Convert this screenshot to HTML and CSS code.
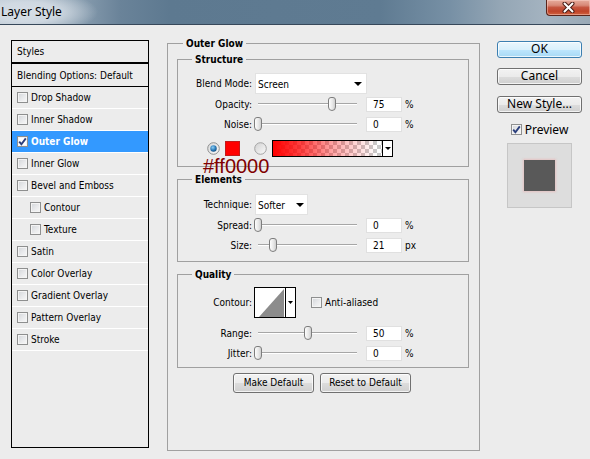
FILE: index.html
```html
<!DOCTYPE html>
<html lang="en">
<head>
<meta charset="utf-8">
<title>Layer Style</title>
<link rel="stylesheet" href="styles.css">
</head>
<body>
<div class="titlebar">
  <span class="title">Layer Style</span>
  <div class="close">
    <svg width="13" height="11" viewBox="0 0 13 11"><path d="M2.5 1.5 L10.5 9.5 M10.5 1.5 L2.5 9.5" stroke="#4a1d16" stroke-width="4" stroke-linecap="round"/><path d="M2.5 1.5 L10.5 9.5 M10.5 1.5 L2.5 9.5" stroke="#fff" stroke-width="2" stroke-linecap="round"/></svg>
  </div>
</div>
<div class="content">
  <div class="styles">
    <div class="item head">Styles</div>
    <div class="item blendopt">Blending Options: Default</div>
    <div class="item"><span class="cb"></span>Drop Shadow</div>
    <div class="item"><span class="cb"></span>Inner Shadow</div>
    <div class="item active"><span class="cb"><svg width="9" height="9" viewBox="0 0 9 9"><path d="M1.2 4.6 L3.4 7.2 L7.8 1.4" fill="none" stroke="#2b3f7c" stroke-width="1.9"/></svg></span>Outer Glow</div>
    <div class="item"><span class="cb"></span>Inner Glow</div>
    <div class="item"><span class="cb"></span>Bevel and Emboss</div>
    <div class="item sub-item"><span class="cb"></span>Contour</div>
    <div class="item sub-item"><span class="cb"></span>Texture</div>
    <div class="item"><span class="cb"></span>Satin</div>
    <div class="item"><span class="cb"></span>Color Overlay</div>
    <div class="item"><span class="cb"></span>Gradient Overlay</div>
    <div class="item"><span class="cb"></span>Pattern Overlay</div>
    <div class="item"><span class="cb"></span>Stroke</div>
  </div>

  <fieldset class="og">
    <legend>Outer Glow</legend>

    <fieldset class="grp structure">
      <legend>Structure</legend>
      <div class="row row-sel">
        <span class="lbl">Blend Mode:</span>
        <div class="select sel-blend"><span>Screen</span><span class="arrow"></span></div>
      </div>
      <div class="row">
        <span class="lbl">Opacity:</span>
        <div class="slider"><span class="thumb" style="--v:.75"></span></div>
        <div class="num">75</div><span class="unit">%</span>
      </div>
      <div class="row">
        <span class="lbl">Noise:</span>
        <div class="slider"><span class="thumb" style="--v:0"></span></div>
        <div class="num">0</div><span class="unit">%</span>
      </div>
      <div class="row color-row">
        <svg class="radio" width="13" height="13" viewBox="0 0 13 13">
          <defs><linearGradient id="rg1" x1="0" y1="0" x2="1" y2="1"><stop offset="0" stop-color="#d8d8d8"/><stop offset="1" stop-color="#fafafa"/></linearGradient>
          <radialGradient id="dot1" cx=".4" cy=".35" r=".7"><stop offset="0" stop-color="#8fd0f5"/><stop offset=".6" stop-color="#2a7ab8"/><stop offset="1" stop-color="#124a7a"/></radialGradient></defs>
          <circle cx="6.5" cy="6.5" r="5.8" fill="url(#rg1)" stroke="#8e8f8f"/>
          <circle cx="6.5" cy="6.5" r="3.2" fill="url(#dot1)"/>
        </svg>
        <span class="swatch"></span>
        <svg class="radio radio2" width="13" height="13" viewBox="0 0 13 13">
          <defs><linearGradient id="rg2" x1="0" y1="0" x2="1" y2="1"><stop offset="0" stop-color="#d0d0d0"/><stop offset="1" stop-color="#fbfbfb"/></linearGradient></defs>
          <circle cx="6.5" cy="6.5" r="5.8" fill="url(#rg2)" stroke="#a3a3a3"/>
        </svg>
        <div class="grad"><span class="grad-fill"></span><span class="grad-drop"><span class="arrow small"></span></span></div>
        <span class="hex">#ff0000</span>
      </div>
    </fieldset>

    <fieldset class="grp elements">
      <legend>Elements</legend>
      <div class="row row-sel">
        <span class="lbl">Technique:</span>
        <div class="select sel-tech"><span>Softer</span><span class="arrow"></span></div>
      </div>
      <div class="row">
        <span class="lbl">Spread:</span>
        <div class="slider"><span class="thumb" style="--v:0"></span></div>
        <div class="num">0</div><span class="unit">%</span>
      </div>
      <div class="row">
        <span class="lbl">Size:</span>
        <div class="slider"><span class="thumb" style="--v:.148"></span></div>
        <div class="num">21</div><span class="unit">px</span>
      </div>
    </fieldset>

    <fieldset class="grp quality">
      <legend>Quality</legend>
      <div class="row row-contour">
        <span class="lbl">Contour:</span>
        <svg class="contour" width="42" height="31" viewBox="0 0 42 31">
          <rect x="0.5" y="0.5" width="41" height="30" fill="#fff" stroke="#000"/>
          <polygon points="5,30 30,2 30,30" fill="#8c8c8c"/>
          <line x1="31.5" y1="1" x2="31.5" y2="30" stroke="#000"/>
          <polygon points="34,14 39,14 36.5,17" fill="#000"/>
        </svg>
        <span class="cb aa"></span><span class="aa-text">Anti-aliased</span>
      </div>
      <div class="row row-range">
        <span class="lbl">Range:</span>
        <div class="slider"><span class="thumb" style="--v:.5"></span></div>
        <div class="num">50</div><span class="unit">%</span>
      </div>
      <div class="row">
        <span class="lbl">Jitter:</span>
        <div class="slider"><span class="thumb" style="--v:0"></span></div>
        <div class="num">0</div><span class="unit">%</span>
      </div>
    </fieldset>

    <div class="defaults">
      <div class="btn small w-make">Make Default</div>
      <div class="btn small w-reset">Reset to Default</div>
    </div>
  </fieldset>

  <div class="side">
    <div class="btn big default">OK</div>
    <div class="btn big cancel">Cancel</div>
    <div class="btn big newstyle">New Style...</div>
    <div class="preview-row"><span class="cb"><svg width="9" height="9" viewBox="0 0 9 9"><path d="M1.2 4.6 L3.4 7.2 L7.8 1.4" fill="none" stroke="#2b3f7c" stroke-width="1.9"/></svg></span><span>Preview</span></div>
    <div class="preview"><span class="preview-sq"></span></div>
  </div>
</div>
</body>
</html>
```
FILE: styles.css
```css
* { box-sizing: border-box; }
html, body { margin: 0; padding: 0; }
body {
  width: 590px;
  height: 459px;
  overflow: hidden;
  background: #ececec;
  font-family: "DejaVu Sans Condensed", "Liberation Sans", sans-serif;
  font-size: 10px;
  color: #000;
}

/* title bar */
.titlebar {
  height: 25px;
  border-bottom: 1px solid #37485a;
  display: flex;
  justify-content: space-between;
  align-items: flex-start;
  background:
    radial-gradient(ellipse 70px 22px at 28px 12px, rgba(214,222,230,1) 0, rgba(214,222,230,.85) 45%, rgba(214,222,230,0) 100%),
    linear-gradient(90deg, #b9c5d0 0, #8fa3b4 70px, #6a8399 120px, #5d7990 170px, #5f7b92 380px, #7790a5 450px, #94a6b5 500px, #a4b3c0 545px, #9aa9b6 590px);
}
.title {
  font-family: "Noto Sans", "Open Sans", sans-serif;
  font-size: 12px;
  line-height: 23px;
  padding-left: 1px;
  color: #000;
}
.close {
  width: 44px;
  height: 16px;
  border: 1px solid #5a241a;
  border-top: 0;
  border-right: 0;
  border-radius: 0 0 0 4px;
  background: linear-gradient(#e6ab9c 0, #d88a78 35%, #c5553f 50%, #c0442a 75%, #d0623f 100%);
  box-shadow: inset 0 0 0 1px rgba(255,220,210,.45);
  display: flex;
  align-items: center;
  justify-content: center;
}

.content { display: flex; align-items: flex-start; }

/* styles list */
.styles {
  margin: 15px 0 0 11px;
  width: 138px;
  height: 408px;
  border: 1px solid #000;
  flex: none;
}
.item {
  height: 22px;
  border-bottom: 1px solid #fff;
  display: flex;
  align-items: center;
  gap: 3px;
  padding-left: 5px;
  white-space: nowrap;
}
.item.head { height: 23px; border-bottom: 2px solid #000; }
.item.blendopt { height: 23px; border-bottom: 1px solid #000; }
.item.sub-item { padding-left: 18px; }
.item.active { background: #3399ff; color: #fff; font-weight: bold; }

.cb {
  width: 11px;
  height: 11px;
  flex: none;
  border: 1px solid #8e8f8f;
  background: linear-gradient(135deg, #d2d5d9 0, #e9eaec 55%, #f8f8f8 100%);
  box-shadow: inset 0 0 0 1px #f4f4f4;
  display: flex;
  align-items: center;
  justify-content: center;
}
.item.active .cb { background: #fff; }

/* fieldsets */
fieldset {
  margin: 0;
  padding: 0;
  border: 1px solid #a0a0a0;
  min-width: 0;
}
legend {
  padding: 0 3px;
  font-weight: bold;
  line-height: 13px;
  height: 13px;
}
.og {
  margin: 12px 0 0 18px;
  width: 313px;
  height: 414px;
  flex: none;
}
.og > legend { margin-left: 15px; }
.grp { margin-left: 9px; width: 292px; }
.grp > legend { margin-left: 14px; }
.structure { margin-top: 3px; padding-bottom: 9px; }
.elements { margin-top: 6px; padding-bottom: 6px; }
.quality { margin-top: 6px; padding-bottom: 4px; }

.row {
  display: flex;
  align-items: center;
  height: 20px;
}
.lbl {
  width: 74px;
  text-align: right;
  flex: none;
  white-space: nowrap;
}
.row-sel { height: 21px; }
.structure .row-sel { margin-top: 7px; }
.elements .row-sel { margin-top: 8px; }

.select {
  margin-left: 3px;
  height: 21px;
  background: #fff;
  border: 1px solid #e2e2e2;
  display: flex;
  align-items: center;
  justify-content: space-between;
  padding: 1px 3px 0 2px;
}
.sel-blend { width: 112px; padding-right: 4px; }
.sel-tech { width: 53px; padding-right: 3px; }
.arrow {
  width: 0;
  height: 0;
  border-left: 4px solid transparent;
  border-right: 4px solid transparent;
  border-top: 4px solid #000;
}
.arrow.small {
  border-left-width: 3px;
  border-right-width: 3px;
  border-top-width: 3px;
}

.slider {
  position: relative;
  margin-left: 2px;
  width: 108px;
  height: 14px;
  flex: none;
}
.slider::before {
  content: "";
  position: absolute;
  left: 4px;
  width: 99px;
  top: 6px;
  height: 1px;
  background: #a6a6a6;
  box-shadow: 0 1px 0 #fff;
}
.thumb {
  position: absolute;
  top: 0;
  left: calc(4px + 99px * var(--v));
  margin-left: -4px;
  width: 8px;
  height: 14px;
  border: 1px solid #7d7d7d;
  border-radius: 3px 3px 4px 4px;
  background: linear-gradient(90deg, #fdfdfd 0, #e6e6e6 60%, #cfcfcf 100%);
}
.num {
  margin-left: 4px;
  width: 36px;
  height: 15px;
  background: #fff;
  border: 1px solid #e0e0e0;
  padding-left: 6px;
  line-height: 13px;
  flex: none;
}
.unit { margin-left: 3px; }

/* color row */
.color-row {
  position: relative;
  margin-top: 6px;
  height: 17px;
  padding-left: 29px;
}
.radio { flex: none; display: block; }
.swatch {
  margin-left: 5px;
  width: 15px;
  height: 15px;
  background: #ff0000;
  border: 1px solid #c21a1a;
  flex: none;
}
.radio2 { margin-left: 14px; }
.grad {
  margin-left: 5px;
  width: 121px;
  height: 17px;
  border: 1px solid #000;
  display: flex;
  flex: none;
}
.grad-fill {
  flex: 1;
  background:
    linear-gradient(90deg, #ff0000 0, rgba(255,0,0,.75) 25%, rgba(255,0,0,.35) 55%, rgba(255,0,0,0) 95%),
    repeating-conic-gradient(#c9c9c9 0 25%, #ffffff 0 50%) 0 0 / 8px 8px;
}
.grad-drop {
  width: 10px;
  border-left: 1px solid #000;
  background: #fff;
  display: flex;
  align-items: center;
  justify-content: center;
}
.hex {
  position: absolute;
  left: 25px;
  top: 16px;
  font-family: "Liberation Sans", Arial, sans-serif;
  font-size: 20px;
  line-height: 20px;
  color: #800000;
  white-space: nowrap;
}

/* quality */
.row-contour { margin-top: 6px; height: 31px; }
.contour { margin-left: 2px; display: block; flex: none; }
.cb.aa { margin-left: 15px; }
.aa-text { margin-left: 3px; }
.row-range { margin-top: 5px; }

/* buttons */
.btn {
  border: 1px solid #707070;
  border-radius: 3px;
  background: linear-gradient(#f2f2f2 0, #ebebeb 50%, #dddddd 50%, #cfcfcf 100%);
  box-shadow: inset 0 0 0 1px rgba(255,255,255,.75);
  text-align: center;
  white-space: nowrap;
  flex: none;
}
.defaults {
  margin-top: 5px;
  display: flex;
  padding-left: 65px;
  gap: 6px;
}
.btn.small { height: 20px; line-height: 18px; }
.w-make { width: 81px; }
.w-reset { width: 91px; }

.side {
  margin: 16px 0 0 17px;
  width: 85px;
  display: flex;
  flex-direction: column;
  align-items: center;
  flex: none;
}
.btn.big {
  width: 85px;
  height: 17px;
  font-family: "Noto Sans", "Open Sans", sans-serif;
  font-size: 12px;
  line-height: 14px;
}
.btn.default {
  border-color: #3c7fb1;
  background: linear-gradient(#eaf6fd 0, #d9f0fc 50%, #bee6fd 50%, #a7d9f5 100%);
}
.cancel { margin-top: 10px; }
.newstyle { margin-top: 11px; }
.preview-row {
  margin-top: 8px;
  height: 16px;
  display: flex;
  align-items: center;
  gap: 3px;
  font-family: "Noto Sans", "Open Sans", sans-serif;
  font-size: 12px;
}
.preview {
  margin-top: 6px;
  width: 65px;
  height: 65px;
  background: #dddddd;
  border: 1px solid #c6c6c6;
  display: flex;
  align-items: center;
  justify-content: center;
}
.preview-sq {
  width: 31px;
  height: 31px;
  background: #595959;
  box-shadow: 0 0 2px 1px rgba(240,160,160,.45);
}
```
